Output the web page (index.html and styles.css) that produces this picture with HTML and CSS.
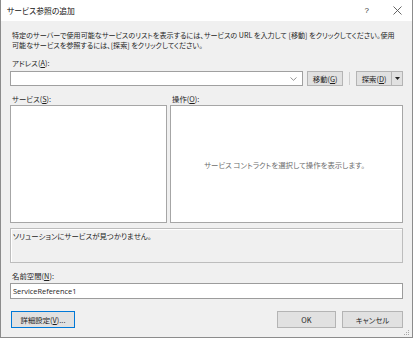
FILE: index.html
```html
<!DOCTYPE html>
<html lang="ja">
<head>
    <meta charset="UTF-8">
    <title>サービス参照の追加</title>
    <link rel="stylesheet" href="styles.css">
</head>
<body>
    <div class="window">
        <div class="titlebar">
            <span class="title">サービス参照の追加</span>
            <span class="help">?</span>
            <svg class="close" width="9" height="9" viewBox="0 0 9 9">
                <path d="M0.5 0.5 L8.5 8.5 M8.5 0.5 L0.5 8.5" stroke="#555" stroke-width="0.9" fill="none"/>
            </svg>
        </div>

        <div class="content">
            <p class="intro">特定のサーバーで使用可能なサービスのリストを表示するには、サービスの URL を入力して [移動] をクリックしてください。使用<br>可能なサービスを参照するには、[探索] をクリックしてください。</p>

            <div class="label">アドレス(<u>A</u>):</div>
            <div class="addressRow">
                <div class="combo">
                    <svg class="chevron" width="7" height="4" viewBox="0 0 7 4">
                        <path d="M0.5 0.5 L3.5 3.3 L6.5 0.5" stroke="#777" stroke-width="0.8" fill="none"/>
                    </svg>
                </div>
                <button class="btn goBtn">移動(<u>G</u>)</button>
                <span class="sep"></span>
                <div class="btn split">
                    <span class="splitMain">探索(<u>D</u>)</span>
                    <span class="splitArrow">
                        <svg width="5" height="3" viewBox="0 0 5 3"><path d="M0 0 L5 0 L2.5 3 Z" fill="#222"/></svg>
                    </span>
                </div>
            </div>

            <div class="panes">
                <div class="pane">
                    <div class="label">サービス(<u>S</u>):</div>
                    <div class="listBox"></div>
                </div>
                <div class="pane">
                    <div class="label">操作(<u>O</u>):</div>
                    <div class="listBox opsBox">
                        <span class="hint">サービス コントラクトを選択して操作を表示します。</span>
                    </div>
                </div>
            </div>

            <div class="status">ソリューションにサービスが見つかりません。</div>

            <div class="label">名前空間(<u>N</u>):</div>
            <div class="textInput">ServiceReference1</div>

            <div class="footer">
                <button class="btn advBtn">詳細設定(<u>V</u>)...</button>
                <span class="spacer"></span>
                <button class="btn okBtn">OK</button>
                <button class="btn cancelBtn">キャンセル</button>
            </div>
        </div>

        <svg class="grip" width="7" height="7" viewBox="0 0 7 7">
            <rect x="5" y="1" width="1" height="1" fill="#a8a8a8"/>
            <rect x="3" y="3" width="1" height="1" fill="#a8a8a8"/>
            <rect x="5" y="3" width="1" height="1" fill="#a8a8a8"/>
            <rect x="1" y="5" width="1" height="1" fill="#a8a8a8"/>
            <rect x="3" y="5" width="1" height="1" fill="#a8a8a8"/>
            <rect x="5" y="5" width="1" height="1" fill="#a8a8a8"/>
        </svg>
    </div>
</body>
</html>
```

FILE: styles.css
```css
html, body {
    margin: 0;
    padding: 0;
    background: #f0f0f0;
}

body {
    font-family: "Noto Sans CJK JP", "Noto Sans", sans-serif;
    font-size: 7.4px;
    font-feature-settings: "palt";
    color: #1e1e1e;
}

u {
    text-decoration-thickness: 0.6px;
    text-underline-offset: 1px;
}

.window {
    position: relative;
    box-sizing: border-box;
    width: 413px;
    height: 338px;
    background: #f0f0f0;
    border-left: 1px solid #8c8c8c;
    border-right: 1px solid #8c8c8c;
    border-bottom: 1px solid #8c8c8c;
}

.titlebar {
    height: 21px;
    background: #ffffff;
    display: flex;
    align-items: center;
    padding-left: 6px;
    padding-right: 10px;
}

.title {
    flex: 1;
    font-size: 7.8px;
    color: #111;
}

.help {
    font-family: "Liberation Sans", sans-serif;
    font-size: 8px;
    color: #333;
    margin-right: 24px;
}

.content {
    padding: 0 9px 0 9px;
}

.intro {
    margin: 9px 0 0 2px;
    font-size: 7.1px;
    line-height: 10px;
    white-space: nowrap;
}

.label {
    line-height: 10px;
    padding-left: 2px;
    white-space: nowrap;
}

.intro + .label {
    margin-top: 8px;
}

.addressRow {
    display: flex;
    align-items: center;
    margin-top: 3px;
    height: 15px;
}

.combo {
    box-sizing: border-box;
    width: 294px;
    height: 15px;
    background: #fff;
    border: 1px solid #a0a0a0;
    display: flex;
    align-items: center;
    justify-content: flex-end;
    padding-right: 5px;
}

.btn {
    box-sizing: border-box;
    font-family: inherit;
    font-size: 7.4px;
    font-feature-settings: "palt";
    color: #1e1e1e;
    background: #e1e1e1;
    border: 1px solid #b4b4b4;
    padding: 0;
    margin: 0;
    display: flex;
    align-items: center;
    justify-content: center;
}

.goBtn {
    width: 36px;
    height: 15px;
    margin-left: 4px;
}

.sep {
    width: 1px;
    height: 13px;
    background: #cfcfcf;
    margin: 0 6px 0 6px;
}

.split {
    width: 47px;
    height: 15px;
    justify-content: flex-start;
}

.splitMain {
    flex: 1;
    text-align: center;
    border-right: 1px solid #b4b4b4;
    height: 13px;
    line-height: 13px;
}

.splitArrow {
    width: 10px;
    display: flex;
    justify-content: center;
    align-items: center;
}

.panes {
    display: grid;
    grid-template-columns: 157px 1fr;
    gap: 3px;
    margin-top: 8px;
}

.pane .label {
    margin-bottom: 1px;
}

.listBox {
    box-sizing: border-box;
    height: 118px;
    background: #fff;
    border: 1px solid #a6a6a6;
}

.opsBox {
    display: flex;
    align-items: center;
    justify-content: center;
    color: #6d6d6d;
}

.hint {
    margin-top: 1px;
    margin-left: -4px;
}

.status {
    box-sizing: border-box;
    height: 35px;
    margin-top: 5px;
    border: 1px solid #bdbdbd;
    box-shadow: inset 1px 1px 0 #ffffff;
    padding: 2px 2px;
    line-height: 10px;
}

.status + .label {
    margin-top: 8px;
}

.textInput {
    box-sizing: border-box;
    height: 16px;
    margin-top: 2px;
    background: #fff;
    border: 1px solid #9c9c9c;
    padding-left: 2px;
    line-height: 14px;
    font-family: "Open Sans", "Noto Sans", sans-serif;
    font-size: 7.4px;
}

.footer {
    display: flex;
    margin-top: 12px;
    height: 17px;
}

.advBtn {
    width: 64px;
    height: 17px;
    margin-left: 1px;
    border-color: #0078d7;
}

.spacer {
    flex: 1;
}

.okBtn {
    width: 59px;
    height: 17px;
}

.cancelBtn {
    width: 61px;
    height: 17px;
    margin-left: 6px;
}

.grip {
    position: absolute;
    right: 2px;
    bottom: 1px;
}
```
